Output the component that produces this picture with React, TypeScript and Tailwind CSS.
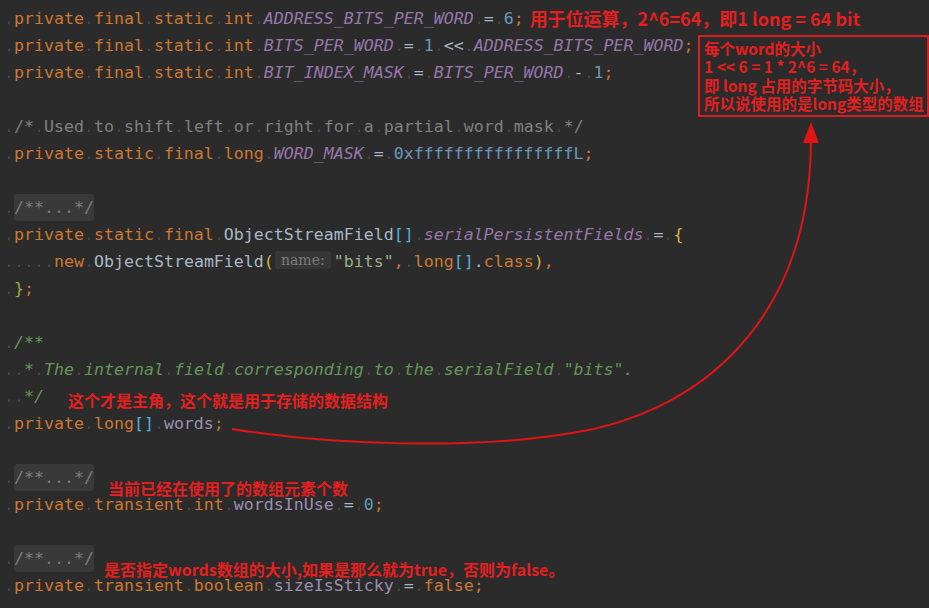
import React from 'react';

const K = 'text-[#cc7832]';
const C = 'italic text-[#9876aa]';
const F = 'text-[#9a8fb0]';
const D = 'text-[#a9b7c6]';
const N = 'text-[#6897bb]';
const G = 'text-[#808080]';
const DOC = 'italic text-[#629755]';
const BR = 'text-[#4fb0d8]';
const GOLD = 'text-[#d4b24c]';
const STR = 'text-[#9cab8c]';

const DOT =
  'bg-[radial-gradient(circle_at_50%_72%,#464646_1px,transparent_1.5px)]';

type Tok = [string, string] | React.ReactNode;

// splits a token on spaces so every space shows as an editor whitespace dot
const renderTok = (text: string, cls: string, key: number) => {
  const parts = text.split(' ');
  return (
    <span key={key} className={cls}>
      {parts.map((p, i) => (
        <React.Fragment key={i}>
          {i > 0 && <span className={DOT}> </span>}
          {p}
        </React.Fragment>
      ))}
    </span>
  );
};

const Fold = () => (
  <span className="inline-block align-top h-[27px] w-[80px] rounded-[3px] bg-[#393939] text-[#7c7c7c]">
    /**...*/
  </span>
);

const Hint = () => (
  <span className="inline-block align-top mt-[3px] ml-[1px] mr-[3px] h-[18px] w-[56px] rounded-[3px] bg-[#363636] text-center text-[14px] leading-[18px] text-[#7a7a7a] font-['DejaVu_Serif',serif]">
    name:
  </span>
);

const lines: Tok[][] = [
  [[' ', ''], ['private final static int ', K], ['ADDRESS_BITS_PER_WORD', C], [' = ', D], ['6', N], [';', K],
    <span key="a" className="ml-[6px] align-top text-[18px] font-bold text-[#e3201f] font-['Noto_Sans_CJK_SC',sans-serif]">用于位运算，2^6=64，即1 long = 64 bit</span>],
  [[' ', ''], ['private final static int ', K], ['BITS_PER_WORD', C], [' = ', D], ['1', N], [' << ', D], ['ADDRESS_BITS_PER_WORD', C], [';', K]],
  [[' ', ''], ['private final static int ', K], ['BIT_INDEX_MASK', C], [' = ', D], ['BITS_PER_WORD', C], [' - ', D], ['1', N], [';', K]],
  [],
  [[' ', ''], ['/* Used to shift left or right for a partial word mask */', G]],
  [[' ', ''], ['private static final long ', K], ['WORD_MASK', C], [' = ', D], ['0xffffffffffffffffL', N], [';', K]],
  [],
  [[' ', ''], <Fold key="f" />],
  [[' ', ''], ['private static final ', K], ['ObjectStreamField', D], ['[]', BR], [' ', ''], ['serialPersistentFields', C], [' = ', D], ['{', GOLD]],
  [['     ', ''], ['new ', K], ['ObjectStreamField', D], ['(', GOLD], <Hint key="h" />, ['"bits"', STR], [',', K], [' ', ''], ['long', K], ['[]', BR], ['.', D], ['class', K], [')', GOLD], [',', K]],
  [[' ', ''], ['}', 'text-[#a3a844]'], [';', K]],
  [],
  [[' ', ''], ['/**', DOC]],
  [['  * The internal field corresponding to the serialField "bits".', DOC]],
  [['  */', DOC]],
  [[' ', ''], ['private ', K], ['long', K], ['[]', BR], [' ', ''], ['words', F], [';', K]],
  [],
  [[' ', ''], <Fold key="f" />],
  [[' ', ''], ['private transient int ', K], ['wordsInUse', F], [' = ', D], ['0', N], [';', K]],
  [],
  [[' ', ''], <Fold key="f" />],
  [[' ', ''], ['private transient boolean ', K], ['sizeIsSticky', F], [' = ', D], ['false', K], [';', K]],
];

const note = "absolute whitespace-nowrap font-bold text-[#e3201f] font-['Noto_Sans_CJK_SC',sans-serif] text-[16px] leading-[17px]";

export default function App() {
  return (
    <div className="relative w-[929px] h-[608px] overflow-hidden bg-[#2b2b2b] font-['DejaVu_Sans_Mono',monospace] text-[16.6px]">
      <div className="flex flex-col pt-[5px]">
        {lines.map((toks, i) => (
          <div key={i} className="h-[27px] leading-[27px] pl-[4px] whitespace-pre">
            {toks.map((t, j) =>
              Array.isArray(t) ? renderTok(t[0] as string, t[1] as string, j) : t
            )}
          </div>
        ))}
      </div>

      {/* annotations laid over the code */}
      <div className="absolute left-[698px] top-[35px] w-[231px] h-[82px] border-2 border-[#d81e1e] pl-[4px] pt-[2px] text-[15.5px] leading-[18.4px] font-bold text-[#e3201f] font-['Noto_Sans_CJK_SC',sans-serif] whitespace-nowrap">
        <div>每个word的大小</div>
        <div>1 &lt;&lt; 6 = 1 * 2^6 = 64，</div>
        <div>即 long 占用的字节码大小，</div>
        <div>所以说使用的是long类型的数组</div>
      </div>
      <div className={`${note} left-[68px] top-[392px]`}>这个才是主角，这个就是用于存储的数据结构</div>
      <div className={`${note} left-[108px] top-[480px]`}>当前已经在使用了的数组元素个数</div>
      <div className={`${note} left-[104px] top-[561px]`}>是否指定words数组的大小,如果是那么就为true，否则为false。</div>

      <svg className="absolute left-0 top-0 pointer-events-none" width="929" height="608" viewBox="0 0 929 608">
        <path d="M232,429 C330,445 470,450 572,433 C690,415 810,330 811,140" fill="none" stroke="#e01414" strokeWidth="2" />
        <polygon points="811,122 803,143 819,143" fill="#e01414" />
      </svg>
    </div>
  );
}
